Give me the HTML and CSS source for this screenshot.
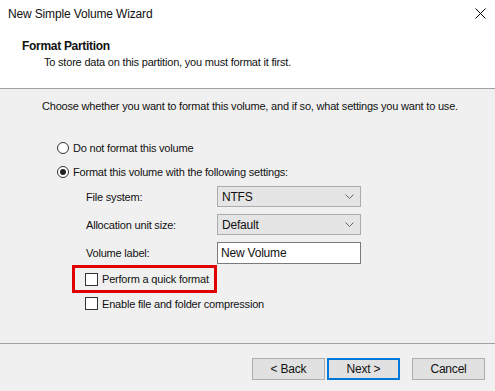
FILE: index.html
```html
<!DOCTYPE html>
<html lang="en">
  <head>
    <meta charset="UTF-8" />
    <title>New Simple Volume Wizard</title>
    <link rel="stylesheet" href="styles.css">
  </head>
  <body>
    <div class="window">
      <div class="titlebar">
        <span class="title">New Simple Volume Wizard</span>
        <svg class="close" width="11" height="11" viewBox="0 0 11 11">
          <path d="M0.5 0.5 L10.5 10.5 M10.5 0.5 L0.5 10.5" stroke="#000" stroke-width="1" fill="none" />
        </svg>
      </div>

      <div class="header">
        <div class="header-title">Format Partition</div>
        <div class="header-sub">To store data on this partition, you must format it first.</div>
      </div>

      <div class="content">
        <p class="intro">Choose whether you want to format this volume, and if so, what settings you want to use.</p>

        <div class="options">
          <div class="radio-row">
            <span class="radio"></span>
            <span>Do not format this volume</span>
          </div>
          <div class="radio-row">
            <span class="radio checked"></span>
            <span>Format this volume with the following settings:</span>
          </div>

          <div class="settings">
            <div class="setting">
              <span class="setting-label">File system:</span>
              <div class="select">
                <span>NTFS</span>
                <svg width="9" height="5" viewBox="0 0 9 5"><path d="M0.5 0.5 L4.5 4.5 L8.5 0.5" stroke="#666" fill="none" /></svg>
              </div>
            </div>
            <div class="setting">
              <span class="setting-label">Allocation unit size:</span>
              <div class="select">
                <span>Default</span>
                <svg width="9" height="5" viewBox="0 0 9 5"><path d="M0.5 0.5 L4.5 4.5 L8.5 0.5" stroke="#666" fill="none" /></svg>
              </div>
            </div>
            <div class="setting">
              <span class="setting-label">Volume label:</span>
              <div class="textbox">New Volume</div>
            </div>
          </div>

          <div class="highlight">
            <div class="check-row">
              <span class="checkbox"></span>
              <span>Perform a quick format</span>
            </div>
          </div>
          <div class="check-row compress">
            <span class="checkbox"></span>
            <span>Enable file and folder compression</span>
          </div>
        </div>
      </div>

      <div class="footer">
        <button class="btn">&lt; Back</button>
        <button class="btn btn-default">Next &gt;</button>
        <button class="btn btn-cancel">Cancel</button>
      </div>
    </div>
  </body>
</html>
```

FILE: styles.css
```css
* {
  box-sizing: border-box;
}

body {
  margin: 0;
  font-family: "Liberation Sans", Arial, sans-serif;
  font-size: 11px;
  letter-spacing: -0.2px;
  color: #111;
  background: #f0f0f0;
}

.window {
  width: 495px;
  height: 391px;
  display: flex;
  flex-direction: column;
  background: #f0f0f0;
}

.titlebar {
  height: 28px;
  display: flex;
  align-items: center;
  justify-content: space-between;
  padding: 0 9px 0 8px;
  background: #fff;
  font-size: 12px;
  letter-spacing: -0.15px;
}

.close {
  margin-top: -2px;
}

.header {
  height: 61px;
  padding: 10px 0 0 22px;
  background: #fff;
  border-bottom: 1px solid #a0a0a0;
}

.header-title {
  font-weight: bold;
  font-size: 12px;
  letter-spacing: -0.3px;
  line-height: 16px;
}

.header-sub {
  line-height: 16px;
  padding-left: 22px;
}

.content {
  flex: 1;
  padding: 9px 0 0 42px;
}

.intro {
  margin: 0;
  line-height: 16px;
  white-space: nowrap;
}

.options {
  margin-top: 24px;
  padding-left: 15px;
}

.radio-row {
  display: flex;
  align-items: center;
  height: 20px;
  margin-bottom: 4px;
}

.radio {
  width: 12px;
  height: 12px;
  border: 1px solid #333;
  border-radius: 50%;
  background: #fff;
  margin-right: 4px;
  display: flex;
  align-items: center;
  justify-content: center;
}

.radio.checked::after {
  content: "";
  width: 6px;
  height: 6px;
  border-radius: 50%;
  background: #222;
}

.settings {
  padding-left: 29px;
  margin-top: 1px;
}

.setting {
  display: flex;
  align-items: center;
  margin-bottom: 7px;
}

.setting-label {
  width: 131px;
}

.select {
  width: 144px;
  height: 21px;
  display: flex;
  align-items: center;
  justify-content: space-between;
  padding: 0 6px 0 4px;
  background: #e5e5e5;
  border: 1px solid #acacac;
  font-size: 12px;
}

.textbox {
  width: 144px;
  height: 22px;
  line-height: 20px;
  padding-left: 3px;
  background: #fff;
  border: 1px solid #7a7a7a;
  font-size: 12px;
}

.highlight {
  width: 145px;
  height: 28px;
  margin: -6px 0 0 15px;
  border: 3px solid #e00000;
  padding-left: 10px;
  display: flex;
  align-items: center;
  white-space: nowrap;
}

.check-row {
  display: flex;
  align-items: center;
}

.check-row.compress {
  margin: 4px 0 0 28px;
}

.checkbox {
  width: 13px;
  height: 13px;
  border: 1px solid #333;
  background: #fff;
  margin-right: 4px;
}

.footer {
  height: 48px;
  border-top: 1px solid #a0a0a0;
  display: flex;
  justify-content: flex-end;
  align-items: flex-start;
  padding: 14px 10px 0 0;
}

.btn {
  width: 73px;
  height: 22px;
  font-family: inherit;
  font-size: 12px;
  letter-spacing: -0.2px;
  color: #111;
  background: #e1e1e1;
  border: 1px solid #adadad;
  padding: 0;
}

.btn-default {
  margin-left: 2px;
  border: 2px solid #0078d7;
}

.btn-cancel {
  margin-left: 12px;
}
```
